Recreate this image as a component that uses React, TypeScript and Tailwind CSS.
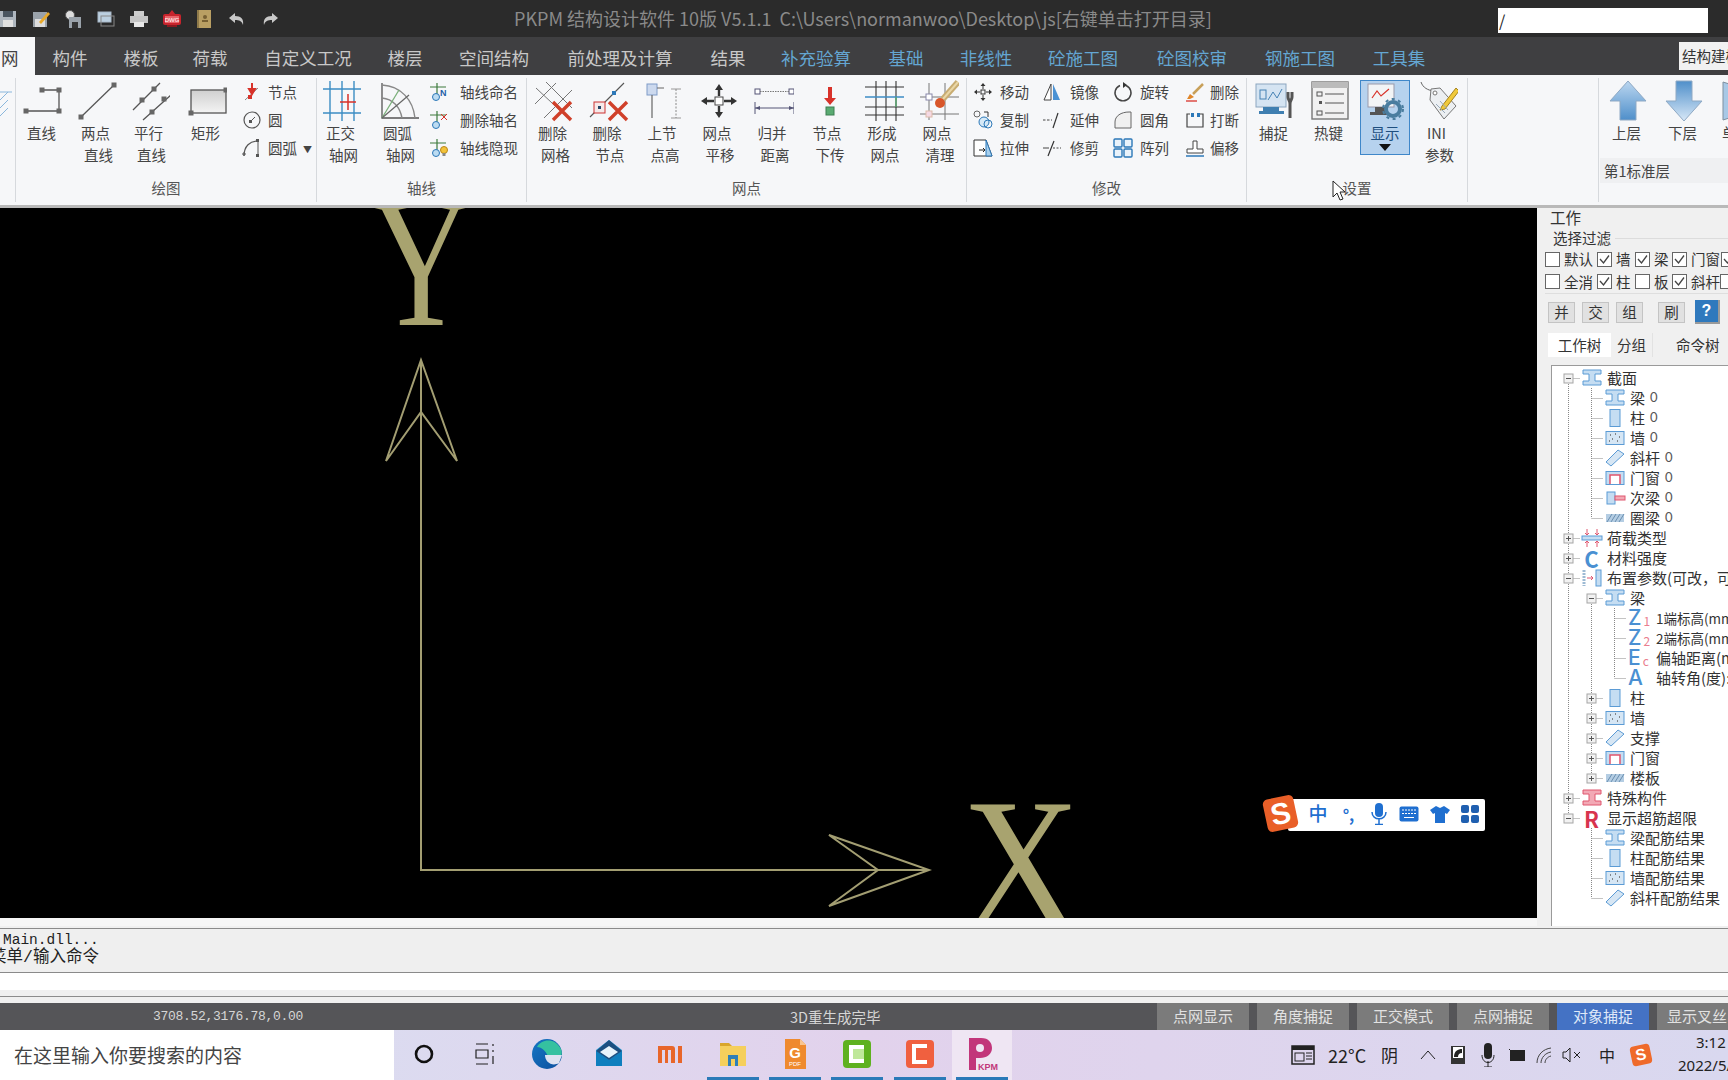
import React from "react";

type P = { children?: React.ReactNode };
const S40 = ({ children }: P) => (<svg width="40" height="42" viewBox="0 0 40 42" fill="none">{children}</svg>);
const S20 = ({ children }: P) => (<svg width="20" height="20" viewBox="0 0 20 20" fill="none">{children}</svg>);
const Sq = ({ x, y, s = 5, f = "#666" }: { x: number; y: number; s?: number; f?: string }) => (<rect x={x - s / 2} y={y - s / 2} width={s} height={s} fill={f} />);
const Grey = "#555";

const Line1 = () => (<S40><path d="M3 31H36V10H19" stroke={Grey} strokeWidth="1.3" /><Sq x={3} y={31} /><Sq x={36} y={31} /><Sq x={36} y={10} /><Sq x={19} y={10} /></S40>);
const Line2 = () => (<S40><path d="M4 37L37 5" stroke={Grey} strokeWidth="1.3" /><Sq x={4} y={37} /><Sq x={37} y={5} /></S40>);
const Line3 = () => (<S40><path d="M3 30L30 3M13 40L41 15" stroke={Grey} strokeWidth="1.3" /><Sq x={12} y={20} /><Sq x={24} y={9} /><Sq x={22} y={32} /><Sq x={34} y={19} /></S40>);
const Rect1 = () => (<svg width="40" height="42" viewBox="0 0 40 42" fill="none"><defs><linearGradient id="rg" x1="0" y1="0" x2="0" y2="1"><stop offset="0" stopColor="#cfcfcf" /><stop offset="1" stopColor="#f4f4f4" /></linearGradient></defs><rect x="4" y="10" width="35" height="23" fill="url(#rg)" stroke={Grey} strokeWidth="1.3" /><Sq x={4} y={33} /><Sq x={39} y={10} /></svg>);

const NodeI = () => (<S20><path d="M3 18L16 6" stroke="#888" /><path d="M10 1V8M7 7L10 12L13 7Z" stroke="#d8322a" strokeWidth="2" fill="#d8322a" /><rect x="6" y="13" width="4" height="4" fill="#d8322a" /></S20>);
const CircleI = () => (<S20><circle cx="10" cy="10" r="8" stroke={Grey} strokeWidth="1.2" /><path d="M8 12L13 7" stroke={Grey} /><rect x="7" y="10" width="3" height="3" fill={Grey} /></S20>);
const ArcI = () => (<S20><path d="M2 18C2 8 8 3 16 3" stroke={Grey} strokeWidth="1.2" /><path d="M16 3V18M0 16H4M2 14V18" stroke={Grey} /><rect x="14" y="1" width="3" height="3" fill={Grey} /><rect x="14" y="16" width="3" height="3" fill={Grey} /></S20>);

const GridI = () => (<S40><path d="M1 9H39M1 33H39" stroke="#3c8dc4" strokeWidth="1.4" /><path d="M8 1V41M20 1V41M32 1V41" stroke="#3c8dc4" strokeWidth="1.4" /><path d="M26 14V30M18 22H34" stroke="#d8322a" strokeWidth="1.5" /></S40>);
const ArcGrid = () => (<S40><path d="M3 3V38H40" stroke="#555" strokeWidth="1.3" /><path d="M3 5C22 6 34 20 36 38M3 18C14 19 21 27 23 38" stroke="#888" strokeWidth="1.4" /><path d="M3 38L20 10" stroke="#7ab07a" strokeWidth="1.3" /><path d="M3 38L30 15" stroke="#666" strokeWidth="1.2" /></S40>);
const AxisBase = ({ children }: P) => (<S20><path d="M0 5H16M7 1V13" stroke="#3d7a3d" strokeWidth="1.2" /><circle cx="6" cy="15" r="3.5" stroke="#2c78b8" fill="#bcdcf2" />{children}</S20>);
const AxisN = () => (<AxisBase><text x="10" y="14" fontSize="9" fontWeight="700" fill="#1f5fa8" fontFamily="Liberation Sans">N</text></AxisBase>);
const AxisX = () => (<AxisBase><path d="M11 4L17 10M17 4L11 10" stroke="#d8322a" /></AxisBase>);
const AxisB = () => (<AxisBase><circle cx="14" cy="12" r="3.5" fill="#f3c33a" stroke="#b9871a" /><rect x="12.5" y="15" width="3" height="3" fill="#888" /></AxisBase>);

const RedX = ({ x = 28, y = 31 }: { x?: number; y?: number }) => (<path d={`M${x - 9} ${y - 9}L${x + 9} ${y + 9}M${x + 9} ${y - 9}L${x - 9} ${y + 9}`} stroke="#d0402a" strokeWidth="3.4" />);
const DelGrid = () => (<S40><path d="M1 24L22 3M10 38L38 10M2 8L34 38M12 2L38 28" stroke="#777" strokeWidth="1" /><RedX /></S40>);
const DelNode = () => (<S40><path d="M1 37L35 3" stroke="#555" strokeWidth="1.1" /><rect x="5" y="22" width="11" height="11" stroke="#c33" fill="#f6e9e9" /><rect x="9" y="26" width="3" height="3" fill="#246" /><rect x="23" y="11" width="4" height="4" fill="#2c78b8" /><RedX x={29} y={31} /></S40>);
const UpNode = () => (<S40><rect x="3" y="4" width="10" height="11" fill="#ccd9ee" stroke="#7f9bc8" /><path d="M8 15V38M13 8H20" stroke="#666" strokeWidth="1.2" /><path d="M27 9H37M27 38H37" stroke="#999" strokeWidth="1.2" /><path d="M32 9V38" stroke="#888" strokeDasharray="2 1.5" /></S40>);
const MoveNode = () => (<S40><rect x="16" y="17" width="8" height="8" fill="#fff" stroke="#444" /><path d="M20 4L16 10H24ZM20 38L16 32H24ZM2 21L8 17V25ZM38 21L32 17V25Z" fill="#333" /><path d="M20 9V16M20 26V33M8 21H15M25 21H32" stroke="#333" strokeWidth="2.4" /></S40>);
const MergeNode = () => (<S40><rect x="1" y="9" width="5" height="5" fill="#fff" stroke="#557" /><rect x="35" y="9" width="5" height="5" fill="#fff" stroke="#557" /><path d="M6 11.500H35" stroke="#777" strokeDasharray="1.500 1" /><path d="M1 22V34M40 22V34" stroke="#557" /><path d="M1 28H40" stroke="#557" /><path d="M1 28L6 26V30ZM40 28L35 26V30Z" fill="#557" /></S40>);
const DownNode = () => (<S40><path d="M21 7V20" stroke="#d8322a" strokeWidth="4" /><path d="M15 18H27L21 25Z" fill="#d8322a" /><rect x="17" y="27" width="8" height="8" fill="#5aab72" stroke="#3c7f52" /></S40>);
const FormNode = () => (<S40><path d="M12 1V41M22 1V41M32 1V41" stroke="#333" strokeWidth="1.1" /><path d="M1 7H41M1 27H41M1 35H41" stroke="#333" strokeWidth="1.2" /><path d="M1 17H41" stroke="#3c8dc4" strokeWidth="1.4" /><path d="M32 17V27" stroke="#5aab72" strokeWidth="1.4" /></S40>);
const CleanNode = () => (<S40><path d="M1 17H40M1 34H40M10 3V40M26 3V40" stroke="#777" strokeWidth="1" /><rect x="7" y="14" width="6" height="6" fill="#fff" stroke="#88a" /><rect x="7" y="31" width="6" height="6" fill="#f5d9e4" stroke="#dba" /><path d="M24 19L39 2" stroke="#c8ac72" strokeWidth="6" /><path d="M24 19L39 2" stroke="#e9d6a6" strokeWidth="2" /><circle cx="21" cy="23" r="5" fill="#d8562a" /></S40>);

const MoveS = () => (<S20><rect x="8" y="8" width="4" height="4" stroke="#333" /><path d="M10 1L7.500 4H12.500ZM10 19L7.500 16H12.500ZM1 10L4 7.500V12.500ZM19 10L16 7.500V12.500Z" fill="#333" /><path d="M10 4V7M10 13V16M4 10H7M13 10H16" stroke="#333" /></S20>);
const CopyS = () => (<S20><circle cx="4" cy="4" r="3" stroke="#666" /><circle cx="11" cy="12" r="5" stroke="#2c78b8" fill="#d6e9f7" /><circle cx="15" cy="14" r="4" stroke="#2c78b8" /><path d="M11 2H15V7" stroke="#333" /></S20>);
const StretchS = () => (<S20><path d="M1 2H13L19 18H1Z" stroke="#333" fill="#fff" /><path d="M13 2L19 18H13Z" fill="#a8d0ee" stroke="#2c78b8" /><path d="M6 12H12M10 10L12 12L10 14" stroke="#222" /></S20>);
const MirrorS = () => (<S20><path d="M9 2L2 18H9Z" stroke="#444" fill="#fff" /><path d="M11 2L18 18H11Z" fill="#4b92d4" /></S20>);
const ExtendS = () => (<S20><path d="M1 10H10" stroke="#444" strokeDasharray="2.500 1.500" /><path d="M16 3L11 18" stroke="#333" strokeWidth="1.2" /></S20>);
const TrimS = () => (<S20><path d="M1 10H7" stroke="#444" /><path d="M12 3L6 18" stroke="#333" strokeWidth="1.2" /><path d="M11 10H19" stroke="#444" strokeDasharray="2 1.500" /></S20>);
const RotateS = () => (<S20><path d="M7 3.500A8 8 0 1 0 13 3.500" stroke="#444" strokeWidth="1.4" /><path d="M10 0L14 3L10 6Z" fill="#333" /></S20>);
const FilletS = () => (<S20><path d="M2 18V12C2 6 8 2 16 2H18V18Z" fill="#f0f0f0" stroke="#666" /></S20>);
const ArrayS = () => (<S20>{[[1, 1], [11, 1], [1, 11], [11, 11]].map(([x, y]) => (<rect key={`${x}${y}`} x={x} y={y} width="8" height="8" rx="1" stroke="#2c78b8" strokeWidth="1.4" fill="#eaf3fb" />))}</S20>);
const EraseS = () => (<S20><path d="M8 12L18 2" stroke="#c8a05a" strokeWidth="2.500" /><path d="M5 12L9 15L5 17H2Z" fill="#e0862a" /><path d="M1 19H12" stroke="#d8322a" strokeWidth="1.3" /></S20>);
const BreakS = () => (<S20><path d="M5 4H2V17H18V4H15" stroke="#444" strokeWidth="1.2" /><rect x="6" y="3" width="3" height="4" fill="#2c78b8" /><rect x="12" y="3" width="3" height="4" fill="#2c78b8" /></S20>);
const OffsetS = () => (<S20><path d="M8 3H12V11H18V15H2V11H8Z" stroke="#444" fill="#fff" /><path d="M1 18H19" stroke="#2c78b8" strokeWidth="1.5" /></S20>);

const Snap = () => (<S40><rect x="1" y="4" width="30" height="23" fill="#d5e4f2" stroke="#8ba6bf" /><rect x="5" y="10" width="6" height="9" stroke="#4682b4" /><path d="M13 20L18 12L22 18L27 9" stroke="#4682b4" /><rect x="8" y="27" width="16" height="5" fill="#3f7fb1" /><rect x="4" y="31" width="25" height="3" fill="#3f7fb1" /><path d="M33 12V17C33 20 35 20 35 24V38M37 12V17C37 20 35 20 35 24" stroke="#555" strokeWidth="3" /></S40>);
const Hot = () => (<S40><rect x="2" y="2" width="36" height="37" fill="#f1f1f1" stroke="#777" strokeWidth="1.4" /><rect x="2" y="2" width="36" height="6" fill="#bbb" /><rect x="7" y="12" width="5" height="4" stroke="#555" /><rect x="7" y="31" width="5" height="4" stroke="#555" /><path d="M15 14H34M15 23H34M15 33H34" stroke="#555" /><rect x="9" y="21" width="3" height="3" fill="#555" /></S40>);
const Disp = () => (<S40><rect x="3" y="3" width="26" height="23" fill="#f2f4f6" stroke="#99a" /><path d="M7 17L12 10L16 15L24 8" stroke="#d8322a" strokeWidth="1.2" /><rect x="10" y="26" width="12" height="5" fill="#555" /><rect x="5" y="31" width="18" height="3" fill="#555" /><circle cx="28" cy="28" r="7" stroke="#4a7d9f" strokeWidth="4" /><circle cx="28" cy="28" r="10" stroke="#4a7d9f" strokeWidth="2" strokeDasharray="3 3.500" /></S40>);
const Ini = () => (<S40><path d="M3 2C5 8 10 10 15 11" stroke="#666" /><path d="M13 9L22 8L38 26L26 39L12 20Z" fill="#eceff2" stroke="#777" /><circle cx="17" cy="13" r="2" fill="#fff" stroke="#777" /><path d="M24 26L38 8L41 11L27 29L22 30Z" fill="#f0c93a" stroke="#a68420" /><path d="M18 24L27 33M22 21L30 30" stroke="#9ab" /></S40>);
const Arrow = ({ up, id }: { up: boolean; id: string }) => (<svg width="40" height="42" viewBox="0 0 40 42" fill="none"><defs><linearGradient id={id} x1="0" y1="0" x2="0" y2="1"><stop offset="0" stopColor={up ? "#bcd7f0" : "#4f8fca"} /><stop offset="1" stopColor={up ? "#4f8fca" : "#d8e8f7"} /></linearGradient></defs><path d={up ? "M20 1L38 21H28V40H12V21H2Z" : "M12 1H28V21H38L20 41L2 21H12Z"} fill={`url(#${id})`} stroke="#8fa9c4" /></svg>);

const Big = ({ a, b, w, icon }: { a: string; b?: string; w: string; icon: React.ReactNode }) => (
  <div className={`${w} shrink-0 flex flex-col items-center pt-[2px]`}>
    <div className="h-[42px]">{icon}</div>
    <div className="h-[22px] leading-[22px] text-[14.5px] whitespace-nowrap pr-[3px]">{a}</div>
    {b && <div className="h-[21px] leading-[21px] text-[14.5px] whitespace-nowrap pl-[3px]">{b}</div>}
  </div>
);
const Small = ({ icon, label, gap = "ml-[7px]" }: { icon: React.ReactNode; label: React.ReactNode; gap?: string }) => (
  <div className="h-[28px] flex items-center whitespace-nowrap">
    <div className="w-[20px] h-[20px] shrink-0">{icon}</div>
    <div className={`${gap} text-[14.5px]`}>{label}</div>
  </div>
);
const Group = ({ label, w, children }: { label?: string; w: string; children?: React.ReactNode }) => (
  <div className={`${w} shrink-0 h-[124px] flex flex-col border-r border-[#d6d9dd] overflow-hidden`}>
    <div className="h-[99px] flex">{children}</div>
    <div className="h-[22px] leading-[22px] text-center text-[14.5px] text-[#555]">{label}</div>
  </div>
);

const tabs: [string, string, boolean][] = [
  ["构件", "w-[70px]", false], ["楼板", "w-[72px]", false], ["荷载", "w-[66px]", false], ["自定义工况", "w-[130px]", false],
  ["楼层", "w-[64px]", false], ["空间结构", "w-[114px]", false], ["前处理及计算", "w-[138px]", false], ["结果", "w-[78px]", false],
  ["补充验算", "w-[98px]", true], ["基础", "w-[82px]", true], ["非线性", "w-[78px]", true], ["砼施工图", "w-[116px]", true],
  ["砼图校审", "w-[102px]", true], ["钢施工图", "w-[114px]", true], ["工具集", "w-[84px]", true],
];

const Tool = ({ children, w = "w-[33px]" }: { children: React.ReactNode; w?: string }) => (<div className={`${w} shrink-0 flex justify-center`}>{children}</div>);
const TitleIcons = () => (
  <div className="w-[514px] shrink-0 flex items-center -ml-[9px]">
    <Tool w="w-[34px]"><S20><rect x="2" y="2" width="16" height="16" fill="#aeb6be" /><rect x="5" y="2" width="10" height="6" fill="#4a5560" /><rect x="5" y="11" width="10" height="7" fill="#e0e0e0" /></S20></Tool>
    <Tool w="w-[32px]"><S20><rect x="2" y="3" width="14" height="15" fill="#9aa2aa" /><rect x="4" y="10" width="10" height="8" fill="#ddd" /><path d="M8 13L17 3L19 5L10 15Z" fill="#e8a92a" /></S20></Tool>
    <Tool w="w-[32px]"><S20><circle cx="7" cy="6" r="4.500" fill="#ddd" stroke="#555" /><rect x="6" y="8" width="12" height="11" fill="#9aa2aa" /><rect x="9" y="13" width="6" height="6" fill="#333" /></S20></Tool>
    <Tool><S20><rect x="2" y="3" width="13" height="10" fill="#bcd0e0" stroke="#a8b8c8" /><rect x="5" y="7" width="13" height="10" stroke="#888" /></S20></Tool>
    <Tool><S20><rect x="5" y="2" width="10" height="5" fill="#ccc" /><rect x="1" y="7" width="18" height="7" fill="#c4c4c4" /><rect x="5" y="13" width="10" height="5" fill="#e8e8e8" /></S20></Tool>
    <Tool><S20><path d="M10 1L14 6H6Z" fill="#c8242c" /><rect x="1" y="5" width="18" height="11" rx="2" fill="#c8242c" /><rect x="3" y="7" width="14" height="7" fill="#e9646a" /><text x="10" y="13" fontSize="6" fill="#fff" textAnchor="middle" fontFamily="Liberation Sans">DWG</text><rect x="5" y="16" width="10" height="2" fill="#8a1a20" /></S20></Tool>
    <Tool w="w-[32px]"><S20><rect x="3" y="1" width="14" height="18" fill="#8f7a4a" /><rect x="5" y="1" width="12" height="18" fill="#b99f63" /><circle cx="11" cy="8" r="2" fill="#776033" /><rect x="8" y="11" width="6" height="2" fill="#776033" /></S20></Tool>
    <Tool><S20><path d="M8 4L2 9L8 14V11C12 11 15 12 16 16C17 10 14 7 8 7Z" fill="#c8c8c8" /></S20></Tool>
    <Tool><S20><path d="M12 4L18 9L12 14V11C8 11 5 12 4 16C3 10 6 7 12 7Z" fill="#c8c8c8" /></S20></Tool>
  </div>
);

const Check = ({ on, w, label }: { on?: boolean; w: string; label?: string }) => (
  <div className={`${w} shrink-0 flex items-center`}>
    <div className="w-[15px] h-[15px] border border-[#666] bg-white shrink-0">
      {on && <svg width="13" height="13" viewBox="0 0 13 13" fill="none"><path d="M2 6L5.500 10L11 2.500" stroke="#444" strokeWidth="1.3" /></svg>}
    </div>
    {label && <span className="ml-[4px] text-[14.5px] text-[#333] whitespace-nowrap">{label}</span>}
  </div>
);
const PBtn = ({ t, cls = "" }: { t: string; cls?: string }) => (<div className={`w-[27px] h-[21px] bg-[#e1e1e1] border border-[#c4c4c4] flex items-center justify-center text-[14.5px] text-[#333] ${cls}`}>{t}</div>);

const B = "#5b9bd5";
const L = "#c5ddf2";
const S16 = ({ children }: P) => (<svg width="22" height="18" viewBox="0 0 22 18" fill="none">{children}</svg>);
const IBeam = ({ red }: { red?: boolean }) => (<S16><path d="M2 1H20V5H14V12H20V16H2V12H8V5H2Z" fill={red ? "#f2a9b5" : L} stroke={red ? "#e0566e" : B} /></S16>);
const ColI = () => (<S16><rect x="6" y="0.500" width="10" height="17" fill={L} stroke={B} /></S16>);
const WallI = () => (<S16><rect x="2" y="2.500" width="18" height="13" fill="#d6e6f4" stroke={B} /><path d="M6 6H7M11 5H12M15 8H16M8 10H9M13 12H14M5 12H6" stroke="#666" strokeWidth="1.400" /></S16>);
const BraceI = () => (<S16><path d="M2 13L14 1L20 5L7 17Z" fill="#d6e6f4" stroke={B} /></S16>);
const DoorI = () => (<S16><rect x="2" y="2.500" width="18" height="13" fill={L} stroke={B} /><path d="M6 15V6H16V15" fill="#fff" stroke="#e0566e" strokeWidth="1.500" /></S16>);
const SecI = () => (<S16><rect x="3" y="3" width="8" height="12" fill={L} stroke={B} /><rect x="11" y="7" width="10" height="4" fill="#f2a9b5" stroke="#e0566e" /></S16>);
const RingI = () => (<S16><rect x="2" y="5" width="18" height="8" fill="#b4cde3" /><path d="M3 13L8 5M7 13L12 5M11 13L16 5M15 13L20 5" stroke="#6a8fb0" /></S16>);
const LoadI = () => (<S16><rect x="1" y="7" width="20" height="4" fill={L} stroke={B} /><path d="M6 0V6M16 0V6M6 12V18M16 12V18M4 4L6 6L8 4M14 4L16 6L18 4M4 14L6 12L8 14M14 14L16 12L18 14" stroke="#e0566e" /></S16>);
const LayI = () => (<S16><path d="M3 1V17" stroke="#9dbad4" strokeWidth="3" strokeDasharray="2 1" /><rect x="15" y="1" width="5" height="16" fill={L} stroke={B} /><path d="M6 9H12M10 7L12 9L10 11" stroke="#e0566e" /></S16>);
const Let = ({ t, c }: { t: string; c: string }) => (<span className="w-[22px] text-center text-[22px] leading-[20px] font-semibold" style={{ color: c }}>{t}</span>);

type CellT = "" | "|" | "T" | "L" | "+T" | "+L" | "-T" | "-L" | "-F";
const Cell = ({ k }: { k: CellT }) => {
  const box = k.includes("+") || k.includes("-");
  const top = k === "|" || k === "T" || k === "L" || k === "+T" || k === "+L" || k === "-T" || k === "-L";
  const bot = k === "|" || k === "T" || k === "+T" || k === "-T" || k === "-F";
  const h = k !== "" && k !== "|";
  return (
    <svg width="23" height="20" viewBox="0 0 23 20" className="shrink-0" fill="none">
      {top && <path d="M11.500 0V10" stroke="#888" strokeDasharray="1 1" />}
      {bot && <path d="M11.500 10V20" stroke="#888" strokeDasharray="1 1" />}
      {h && <path d="M11.500 10.500H23" stroke="#888" strokeDasharray="1 1" />}
      {box && <rect x="7" y="6" width="9" height="9" fill="#f2f2f2" stroke="#a5a5a5" />}
      {box && <path d="M9 10.500H14" stroke="#555" />}
      {k.includes("+") && <path d="M11.500 8V13" stroke="#555" />}
    </svg>
  );
};
const Row = ({ c, icon, t, n, lvl = 0 }: { c: CellT[]; icon: React.ReactNode; t: React.ReactNode; n?: string; lvl?: number }) => (
  <div className="h-[20px] flex items-center whitespace-nowrap">
    {c.map((k, i) => <Cell key={i} k={k} />)}
    <div className={`${lvl === 3 ? "w-[30px]" : "w-[23px]"} shrink-0 flex justify-center`}>{icon}</div>
    <span className={`${lvl === 3 ? "" : "ml-[4px]"} text-[15px] text-[#333]`}>{t}</span>
    {n && <span className="ml-[5px] text-[13px] text-[#555] font-['Lato',sans-serif]">{n}</span>}
  </div>
);
const Zed = ({ a, s }: { a: string; s?: string }) => (
  <div className="flex items-center h-[20px] w-[30px] pl-[2px] overflow-hidden">
    <span className="text-[21px] leading-[20px] text-[#4a90d2] font-medium font-['Inter',sans-serif]">{a}</span>
    {s && <span className="text-[12px] leading-[14px] text-[#ea7d8e] ml-[2px] mt-[5px]">{s}</span>}
  </div>
);

const Tree = () => (
  <div className="flex-1 bg-white border-l border-t border-[#9a9a9a] pt-[2px] pl-[5px] overflow-hidden ml-[6px]">
    <Row c={["-F"]} icon={<IBeam />} t="截面" />
    <Row c={["|", "T"]} lvl={1} icon={<IBeam />} t="梁" n="0" />
    <Row c={["|", "T"]} lvl={1} icon={<ColI />} t="柱" n="0" />
    <Row c={["|", "T"]} lvl={1} icon={<WallI />} t="墙" n="0" />
    <Row c={["|", "T"]} lvl={1} icon={<BraceI />} t="斜杆" n="0" />
    <Row c={["|", "T"]} lvl={1} icon={<DoorI />} t="门窗" n="0" />
    <Row c={["|", "T"]} lvl={1} icon={<SecI />} t="次梁" n="0" />
    <Row c={["|", "L"]} lvl={1} icon={<RingI />} t="圈梁" n="0" />
    <Row c={["+T"]} icon={<LoadI />} t="荷载类型" />
    <Row c={["+T"]} icon={<Let t="C" c="#4a90d2" />} t="材料强度" />
    <Row c={["-T"]} icon={<LayI />} t="布置参数(可改，可批量修改)" />
    <Row c={["|", "-F"]} lvl={1} icon={<IBeam />} t="梁" />
    <Row c={["|", "|", "T"]} lvl={3} icon={<Zed a="Z" s="1" />} t={<span className="text-[13.5px]">1端标高(mm):0</span>} />
    <Row c={["|", "|", "T"]} lvl={3} icon={<Zed a="Z" s="2" />} t={<span className="text-[13.5px]">2端标高(mm):0</span>} />
    <Row c={["|", "|", "T"]} lvl={3} icon={<Zed a="E" s="c" />} t="偏轴距离(mm):0" />
    <Row c={["|", "|", "L"]} lvl={3} icon={<Zed a="A" />} t="轴转角(度):0" />
    <Row c={["|", "+T"]} lvl={1} icon={<ColI />} t="柱" />
    <Row c={["|", "+T"]} lvl={1} icon={<WallI />} t="墙" />
    <Row c={["|", "+T"]} lvl={1} icon={<BraceI />} t="支撑" />
    <Row c={["|", "+T"]} lvl={1} icon={<DoorI />} t="门窗" />
    <Row c={["|", "+L"]} lvl={1} icon={<RingI />} t="楼板" />
    <Row c={["+T"]} icon={<IBeam red />} t="特殊构件" />
    <Row c={["-L"]} icon={<Let t="R" c="#d8344e" />} t="显示超筋超限" />
    <Row c={["", "T"]} lvl={1} icon={<IBeam />} t="梁配筋结果" />
    <Row c={["", "T"]} lvl={1} icon={<ColI />} t="柱配筋结果" />
    <Row c={["", "T"]} lvl={1} icon={<WallI />} t="墙配筋结果" />
    <Row c={["", "L"]} lvl={1} icon={<BraceI />} t="斜杆配筋结果" />
  </div>
);

const TB = ({ children, w = "w-[62px]", line, cls = "" }: { children: React.ReactNode; w?: string; line?: boolean; cls?: string }) => (
  <div className={`${w} ${cls} shrink-0 h-[50px] flex flex-col items-center`}>
    <div className="h-[47px] flex items-center justify-center">{children}</div>
    {line && <div className="h-[3px] w-[52px] bg-[#2a7ab8]" />}
  </div>
);
const I30 = ({ children }: P) => (<svg width="32" height="32" viewBox="0 0 32 32" fill="none">{children}</svg>);

const Tray = ({ children, w }: { children: React.ReactNode; w: string }) => (<div className={`${w} shrink-0 flex items-center justify-center`}>{children}</div>);

const StatusBtn = ({ t, on, w = "w-[92px]" }: { t: string; on?: boolean; w?: string }) => (
  <div className={`${w} h-[27px] shrink-0 flex items-center justify-center text-[15px] whitespace-nowrap ${on ? "bg-[#4472c4] text-[#dfe8f8]" : "bg-[#7b7b7b] text-[#e2e2e2]"}`}>{t}</div>
);

export default function App() {
  return (
    <div className="relative w-[1728px] h-[1080px] overflow-hidden bg-[#f0f0f0] font-['Noto_Sans_CJK_SC','Noto_Sans',sans-serif] text-[#444]">
      <div className="h-[37px] bg-[#2b2b2b] flex items-center">
        <TitleIcons />
        <div className="ml-[9px] text-[18px] text-[#8a8a8a] whitespace-pre">{"PKPM 结构设计软件 10版 V5.1.1  C:\\Users\\normanwoo\\Desktop\\js[右键单击打开目录]"}</div>
        <div className="ml-auto mr-[20px] mt-[4px] w-[210px] h-[25px] bg-white text-[#222] text-[16px] leading-[24px] pl-[1px]">/</div>
      </div>

      <div className="h-[38px] bg-[#3f3f41] flex items-stretch text-[17.5px]">
        <div className="w-[35px] bg-[#f6f7f9] text-[#444] flex items-center pl-[1px] pt-[4px] overflow-hidden"><span>网</span></div>
        {tabs.map(([t, w, blue]) => (
          <div key={t} className={`${w} flex items-center justify-center pt-[4px] ${blue ? "text-[#64a6d2]" : "text-[#c8c8c8]"}`}>{t}</div>
        ))}
        <div className="ml-auto mt-[5px] mb-[5px] w-[49px] bg-[#f1f1f1] text-[#333] text-[14.5px] leading-[28px] pl-[3px] overflow-hidden whitespace-nowrap">结构建模</div>
      </div>

      <div className="h-[130px] bg-[#f6f7f9] flex pt-[3px]">
        <Group w="w-[16px]"><svg width="16" height="42" viewBox="0 0 16 42" fill="none" className="mt-[6px] shrink-0"><path d="M0 8H12M0 16L8 8M0 24L8 16M0 32L8 24" stroke="#8bb7dc" /></svg></Group>
        <Group w="w-[301px]" label="绘图">
          <Big w="w-[54px]" a="直线" icon={<Line1 />} />
          <Big w="w-[54px]" a="两点" b="直线" icon={<Line2 />} />
          <Big w="w-[52px]" a="平行" b="直线" icon={<Line3 />} />
          <Big w="w-[62px]" a="矩形" icon={<Rect1 />} />
          <div className="ml-[4px]">
            <Small icon={<NodeI />} label="节点" gap="ml-[6px]" />
            <Small icon={<CircleI />} label="圆" gap="ml-[6px]" />
            <Small icon={<ArcI />} label={<span>圆弧<span className="text-[9px] ml-[6px] align-middle">▼</span></span>} gap="ml-[6px]" />
          </div>
        </Group>
        <Group w="w-[210px]" label="轴线">
          <Big w="w-[50px]" a="正交" b="轴网" icon={<GridI />} />
          <Big w="w-[64px]" a="圆弧" b="轴网" icon={<ArcGrid />} />
          <div className="-ml-[1px]">
            <Small icon={<AxisN />} label="轴线命名" gap="ml-[10px]" />
            <Small icon={<AxisX />} label="删除轴名" gap="ml-[10px]" />
            <Small icon={<AxisB />} label="轴线隐现" gap="ml-[10px]" />
          </div>
        </Group>
        <Group w="w-[440px]" label="网点">
          <Big w="w-[54px]" a="删除" b="网格" icon={<DelGrid />} />
          <Big w="w-[55px]" a="删除" b="节点" icon={<DelNode />} />
          <Big w="w-[55px]" a="上节" b="点高" icon={<UpNode />} />
          <Big w="w-[55px]" a="网点" b="平移" icon={<MoveNode />} />
          <Big w="w-[55px]" a="归并" b="距离" icon={<MergeNode />} />
          <Big w="w-[55px]" a="节点" b="下传" icon={<DownNode />} />
          <Big w="w-[55px]" a="形成" b="网点" icon={<FormNode />} />
          <Big w="w-[55px]" a="网点" b="清理" icon={<CleanNode />} />
        </Group>
        <Group w="w-[280px]" label="修改">
          <div className="w-[75px] pl-[6px] shrink-0"><Small icon={<MoveS />} label="移动" /><Small icon={<CopyS />} label="复制" /><Small icon={<StretchS />} label="拉伸" /></div>
          <div className="w-[71px] shrink-0"><Small icon={<MirrorS />} label="镜像" gap="ml-[8px]" /><Small icon={<ExtendS />} label="延伸" gap="ml-[8px]" /><Small icon={<TrimS />} label="修剪" gap="ml-[8px]" /></div>
          <div className="w-[72px] shrink-0"><Small icon={<RotateS />} label="旋转" /><Small icon={<FilletS />} label="圆角" /><Small icon={<ArrayS />} label="阵列" /></div>
          <div className="shrink-0"><Small icon={<EraseS />} label="删除" gap="ml-[5px]" /><Small icon={<BreakS />} label="打断" gap="ml-[5px]" /><Small icon={<OffsetS />} label="偏移" gap="ml-[5px]" /></div>
        </Group>
        <Group w="w-[221px]" label="设置">
          <Big w="w-[56px]" a="捕捉" icon={<Snap />} />
          <Big w="w-[54px]" a="热键" icon={<Hot />} />
          <div className="w-[56px] shrink-0 flex justify-center">
            <div className="w-[50px] h-[75px] mt-[2px] bg-[#b6d2ee] border border-[#3f87c9] flex flex-col items-center text-[#1f4f7f]">
              <div className="h-[41px]"><Disp /></div>
              <div className="h-[22px] leading-[22px] text-[14.5px]">显示</div>
              <svg width="12" height="7" viewBox="0 0 12 7"><path d="M0 0H12L6 7Z" fill="#111" /></svg>
            </div>
          </div>
          <Big w="w-[50px]" a="INI" b="参数" icon={<Ini />} />
        </Group>
        <Group w="w-[131px]" />
        <div className="flex-1 h-[124px] overflow-hidden">
          <div className="flex h-[80px]">
            <Big w="w-[58px]" a="上层" icon={<Arrow up id="au" />} />
            <Big w="w-[54px]" a="下层" icon={<Arrow up={false} id="ad" />} />
            <Big w="w-[54px]" a="单层" icon={<svg width="40" height="42" viewBox="0 0 40 42" fill="none"><path d="M5 2L30 10V32L5 40Z" fill="#a8c8e6" stroke="#7f8f9f" /></svg>} />
          </div>
          <div className="ml-[1px] h-[25px] bg-[#eff0f2] text-[14.5px] leading-[25px] pl-[4px]">第1标准层</div>
        </div>
      </div>
      <div className="h-[3px] bg-[#b9b9b9]" />

      <div className="h-[718px] flex">
        <div className="w-[1537px] shrink-0 flex flex-col">
          <div className="relative h-[710px] bg-black overflow-hidden">
            <div className="absolute left-[321px] top-[-39px] w-[200px] text-center text-[186px] leading-none scale-x-[0.76] text-[#a8a36f] font-['Liberation_Serif',serif]">Y</div>
            <div className="absolute left-[921px] top-[563px] w-[200px] text-center text-[186px] leading-none scale-x-[0.88] text-[#a8a36f] font-['Liberation_Serif',serif]">X</div>
            <svg className="absolute left-0 top-0" width="1537" height="710" viewBox="0 0 1537 710" fill="none">
              <path d="M421 152V662H929M386 253L421 152L457 253L421 204ZM829 627L929 662L829 698L878 662Z" stroke="#a39e72" strokeWidth="2" />
            </svg>
          </div>
          <div className="h-[8px] bg-[#f6f6f6]" />
        </div>
        <div className="flex-1 flex flex-col min-w-0 overflow-hidden bg-[#f0f0f0] pl-[8px] text-[#333]">
          <div className="h-[20px] leading-[18px] text-[15.5px] ml-[5px]">工作</div>
          <div className="h-[20px] flex items-center ml-[8px]"><span className="text-[14.5px] whitespace-nowrap">选择过滤</span><div className="flex-1 h-px bg-[#dcdcdc] ml-[4px]" /></div>
          <div className="h-[22px] flex items-center overflow-hidden">
            <Check w="w-[52px]" label="默认" /><Check on w="w-[38px]" label="墙" /><Check on w="w-[37px]" label="梁" /><Check on w="w-[49px]" label="门窗" /><Check on w="w-[16px]" />
          </div>
          <div className="h-[24px] flex items-center overflow-hidden border-b border-[#dedede]">
            <Check w="w-[52px]" label="全消" /><Check on w="w-[38px]" label="柱" /><Check w="w-[37px]" label="板" /><Check on w="w-[48px]" label="斜杆" /><Check w="w-[16px]" />
          </div>
          <div className="h-[36px] flex items-center pl-[3px]">
            <PBtn t="并" /><PBtn t="交" cls="ml-[7px]" /><PBtn t="组" cls="ml-[7px]" /><PBtn t="刷" cls="ml-[15px]" />
            <div className="ml-[10px] w-[25px] h-[24px] bg-[#2f79bd] border-r-2 border-b-2 border-[#9a9a9a] flex items-center justify-center text-white font-bold text-[16px] font-['Liberation_Sans',sans-serif]">?</div>
          </div>
          <div className="h-[24px] flex items-stretch text-[14.5px] pl-[3px] mt-[3px]">
            <div className="w-[63px] bg-white flex items-center justify-center">工作树</div>
            <div className="w-[42px] flex items-center justify-center border-r border-[#e2e2e2]">分组</div>
            <div className="flex-1 flex items-center pl-[23px] whitespace-nowrap">命令树</div>
          </div>
          <div className="h-[8px]" />
          <Tree />
        </div>
      </div>

      <div className="h-[45px] mt-[2px] bg-[#efefef] border-y border-[#8a8a8a] overflow-hidden font-['Liberation_Mono','Noto_Sans_CJK_SC',monospace] text-[#222] pt-[2px]">
        <div className="h-[18px] leading-[18px] text-[14.5px] pl-[3px] whitespace-nowrap">Main.dll...</div>
        <div className="h-[18px] leading-[18px] text-[16.5px] -ml-[10px] whitespace-nowrap">菜单/输入命令</div>
      </div>
      <div className="h-[17px] bg-white" />
      <div className="h-[13px] bg-[#f0f0f0] flex flex-col justify-center"><div className="h-px bg-[#8c8c8c]" /></div>

      <div className="h-[27px] bg-[#555558] flex items-stretch text-[#d6d6d6]">
        <div className="w-[790px] shrink-0 pl-[153px] text-[13px] leading-[27px] tracking-[-0.3px] font-['Liberation_Mono',monospace]">3708.52,3176.78,0.00</div>
        <div className="w-[367px] shrink-0 text-[14.5px] leading-[27px]">3D重生成完毕</div>
        <div className="flex gap-[8px]">
          <StatusBtn t="点网显示" /><StatusBtn t="角度捕捉" /><StatusBtn t="正交模式" /><StatusBtn t="点网捕捉" /><StatusBtn t="对象捕捉" on /><StatusBtn t="显示叉丝" w="w-[80px]" />
        </div>
      </div>

      <div className="h-[50px] flex bg-gradient-to-r from-[#d6e2f3] via-[#e2d2ec] to-[#d9d8ef] text-[#222] overflow-hidden">
        <div className="w-[394px] shrink-0 bg-white text-[19px] leading-[50px] pl-[14px] text-[#444]">在这里输入你要搜索的内容</div>
        <TB w="w-[60px]"><svg width="22" height="22" viewBox="0 0 22 22" fill="none"><circle cx="11" cy="11" r="8" stroke="#111" strokeWidth="2.600" /></svg></TB>
        <TB w="w-[62px]"><svg width="24" height="24" viewBox="0 0 24 24" fill="none"><path d="M3 2H15M3 8H15V16H3ZM3 22H15M20 2V4M20 8V10M20 14V22" stroke="#222" strokeWidth="1.200" /></svg></TB>
        <TB><I30><defs><linearGradient id="ed" x1="0" y1="0" x2="1" y2="1"><stop offset="0" stopColor="#1577c4" /><stop offset="1" stopColor="#0d4f9e" /></linearGradient></defs><circle cx="16" cy="16" r="15" fill="url(#ed)" /><path d="M6 9C10 1 24 -1 30 11C31 14 31 16 30 18H17C14 12 10 9 6 9Z" fill="#35c1a0" /><path d="M31 17H14C14 24 21 29 28 25Z" fill="#dde2f1" /></I30></TB>
        <TB><I30><path d="M16 2L29 12V28H3V12Z" fill="#2b9fd8" /><path d="M3 13L16 22L29 13V28H3Z" fill="#0f7fbe" /><path d="M3 13L16 2L29 13L16 22Z" fill="#1c4f80" /><path d="M7 14L16 8L25 14L16 20Z" fill="#e8f4fb" /></I30></TB>
        <TB><I30><path d="M3 8H17C19 8 20 9 20 11V25H16V12H13V25H10V12H7V25H3ZM23 8H27V25H23Z" fill="#e8662a" /></I30></TB>
        <TB line><I30><path d="M3 5H12L15 8H3Z" fill="#d9a62a" /><rect x="3" y="8" width="26" height="20" fill="#f5cf5c" /><rect x="11" y="17" width="10" height="11" fill="#2f7fb8" /><rect x="14" y="21" width="4" height="7" fill="#f5cf5c" /></I30></TB>
        <TB line><I30><path d="M6 1H21L27 7V31H6Z" fill="#ef8a2e" /><path d="M21 1L27 7H21Z" fill="#f9c58f" /><text x="16" y="20" textAnchor="middle" fontSize="15" fontWeight="700" fill="#fff" fontFamily="Liberation Sans">G</text><text x="16" y="28" textAnchor="middle" fontSize="6" fill="#fff" fontFamily="Liberation Sans">PDF</text></I30></TB>
        <TB line><I30><rect x="2" y="2" width="28" height="28" rx="4" fill="#5eb11f" /><path d="M23 9H10V23H23" stroke="#fff" strokeWidth="4" fill="#bfe89a" /></I30></TB>
        <TB line w="w-[64px]"><I30><rect x="2" y="2" width="28" height="28" rx="4" fill="#f0603f" /><path d="M23 8H10V24H23" stroke="#fff" strokeWidth="4" /></I30></TB>
        <TB line w="w-[60px]" cls="bg-[#efe6f3]"><svg width="34" height="36" viewBox="0 0 34 36" fill="none"><path d="M4 2H16C24 2 27 7 27 12C27 18 22 22 15 22H11V34H4Z" fill="#c2367a" /><circle cx="15" cy="12" r="4" fill="#efe6f3" /><text x="13" y="34" fontSize="9" fontWeight="700" fill="#c2367a" fontFamily="Liberation Sans">KPM</text></svg></TB>

        <div className="ml-auto w-[440px] shrink-0 flex h-[50px] items-center">
          <Tray w="w-[30px]"><svg width="24" height="20" viewBox="0 0 24 20" fill="none"><rect x="1" y="1" width="22" height="18" stroke="#222" strokeWidth="1.500" /><rect x="1" y="1" width="22" height="4" fill="#222" /><rect x="4" y="8" width="9" height="8" stroke="#222" /><path d="M15 8H21M15 11H21M15 14H21" stroke="#222" /></svg></Tray>
          <div className="w-[50px] shrink-0 ml-[10px] text-[18px] whitespace-nowrap">22°C</div>
          <div className="w-[24px] shrink-0 ml-[3px] text-[17px]">阴</div>
          <Tray w="w-[20px] ml-[13px]"><svg width="16" height="10" viewBox="0 0 16 10" fill="none"><path d="M1 9L8 1L15 9" stroke="#222" /></svg></Tray>
          <Tray w="w-[30px] ml-[5px]"><svg width="14" height="20" viewBox="0 0 14 20" fill="none"><rect x="0" y="1" width="14" height="18" fill="#333" /><rect x="2" y="2" width="10" height="11" fill="#fff" /><path d="M3 12C3 6 7 4 11 4V8C8 8 7 10 7 12Z" fill="#222" /></svg></Tray>
          <Tray w="w-[29px]"><svg width="14" height="24" viewBox="0 0 14 24" fill="none"><rect x="3" y="0" width="8" height="16" rx="4" fill="#222" /><path d="M1 12C1 22 13 22 13 12M7 18V24M3 24H11" stroke="#222" /></svg></Tray>
          <Tray w="w-[29px]"><svg width="18" height="14" viewBox="0 0 18 14" fill="none"><rect x="2" y="2" width="15" height="11" fill="#222" /><path d="M1 1L3 3" stroke="#222" /></svg></Tray>
          <Tray w="w-[30px]"><svg width="20" height="18" viewBox="0 0 20 18" fill="none"><path d="M1 17C1 9 7 3 15 2M5 17C5 12 9 7 15 6M9 17C9 14 11 11 15 10" stroke="#444" /></svg></Tray>
          <Tray w="w-[22px]"><svg width="20" height="16" viewBox="0 0 20 16" fill="none"><path d="M1 5H4L8 1V15L4 11H1ZM12 5L18 11M18 5L12 11" stroke="#222" /></svg></Tray>
          <Tray w="w-[48px]"><span className="text-[16px]">中</span></Tray>
          <Tray w="w-[20px]"><div className="w-[20px] h-[20px] rounded-[4px] bg-[#ef6a2a] -rotate-12 text-white font-bold text-[16px] leading-[20px] text-center font-['Liberation_Sans',sans-serif]">S</div></Tray>
          <div className="w-[50px] shrink-0 ml-[27px] -mt-[3px] flex flex-col overflow-hidden whitespace-nowrap text-[15px] leading-[23px] font-['Noto_Sans',sans-serif]">
            <span className="pl-[18px]">3:12</span>
            <span>2022/5/12</span>
          </div>
        </div>
      </div>

      <div className="absolute left-[1264px] top-[795px] w-[221px] h-[37px] flex items-center">
        <div className="absolute left-[24px] right-0 top-[4px] bottom-[1px] bg-white rounded-[2px]" />
        <div className="relative ml-[1px] w-[36px] h-[33px] rounded-[5px] -rotate-12 bg-[#e95f28] text-white font-bold text-[30px] leading-[33px] text-center font-['Liberation_Sans',sans-serif]">S</div>
        <div className="relative flex items-center text-[#1f6fd0] pl-[7px]">
          <span className="w-[30px] text-[19px] font-medium text-center">中</span>
          <span className="w-[31px] text-[16px] font-bold text-center leading-none">°,</span>
          <div className="w-[30px] flex justify-center"><svg width="16" height="22" viewBox="0 0 16 22" fill="none"><rect x="4" y="0" width="8" height="14" rx="4" fill="#1f6fd0" /><path d="M1 9C1 18 15 18 15 9M8 16V22M4 21.500H12" stroke="#1f6fd0" strokeWidth="1.500" /></svg></div>
          <div className="w-[30px] flex justify-center"><svg width="20" height="16" viewBox="0 0 20 16" fill="none"><rect x="0.500" y="0.500" width="19" height="15" rx="2" fill="#1f6fd0" /><path d="M3 4H17M3 7.500H17" stroke="#fff" strokeDasharray="2 1" /><path d="M5 11.500H15" stroke="#fff" /></svg></div>
          <div className="w-[31px] flex justify-center"><svg width="20" height="18" viewBox="0 0 20 18" fill="none"><path d="M6 1L10 3L14 1L20 5L17 9L15 8V18H5V8L3 9L0 5Z" fill="#1f6fd0" /></svg></div>
          <div className="w-[30px] flex justify-center"><svg width="18" height="18" viewBox="0 0 18 18" fill="#1f5fb0"><rect x="0" y="0" width="8" height="8" rx="2" /><rect x="10" y="0" width="8" height="8" rx="2" /><rect x="0" y="10" width="8" height="8" rx="2" /><rect x="10" y="10" width="8" height="8" rx="2" /></svg></div>
        </div>
      </div>

      <svg className="absolute left-[1332px] top-[180px]" width="16" height="22" viewBox="0 0 16 22" fill="none"><path d="M1 1V17L5 13L8 20L11 19L8 12H13Z" fill="#fff" stroke="#222" /></svg>
    </div>
  );
}
